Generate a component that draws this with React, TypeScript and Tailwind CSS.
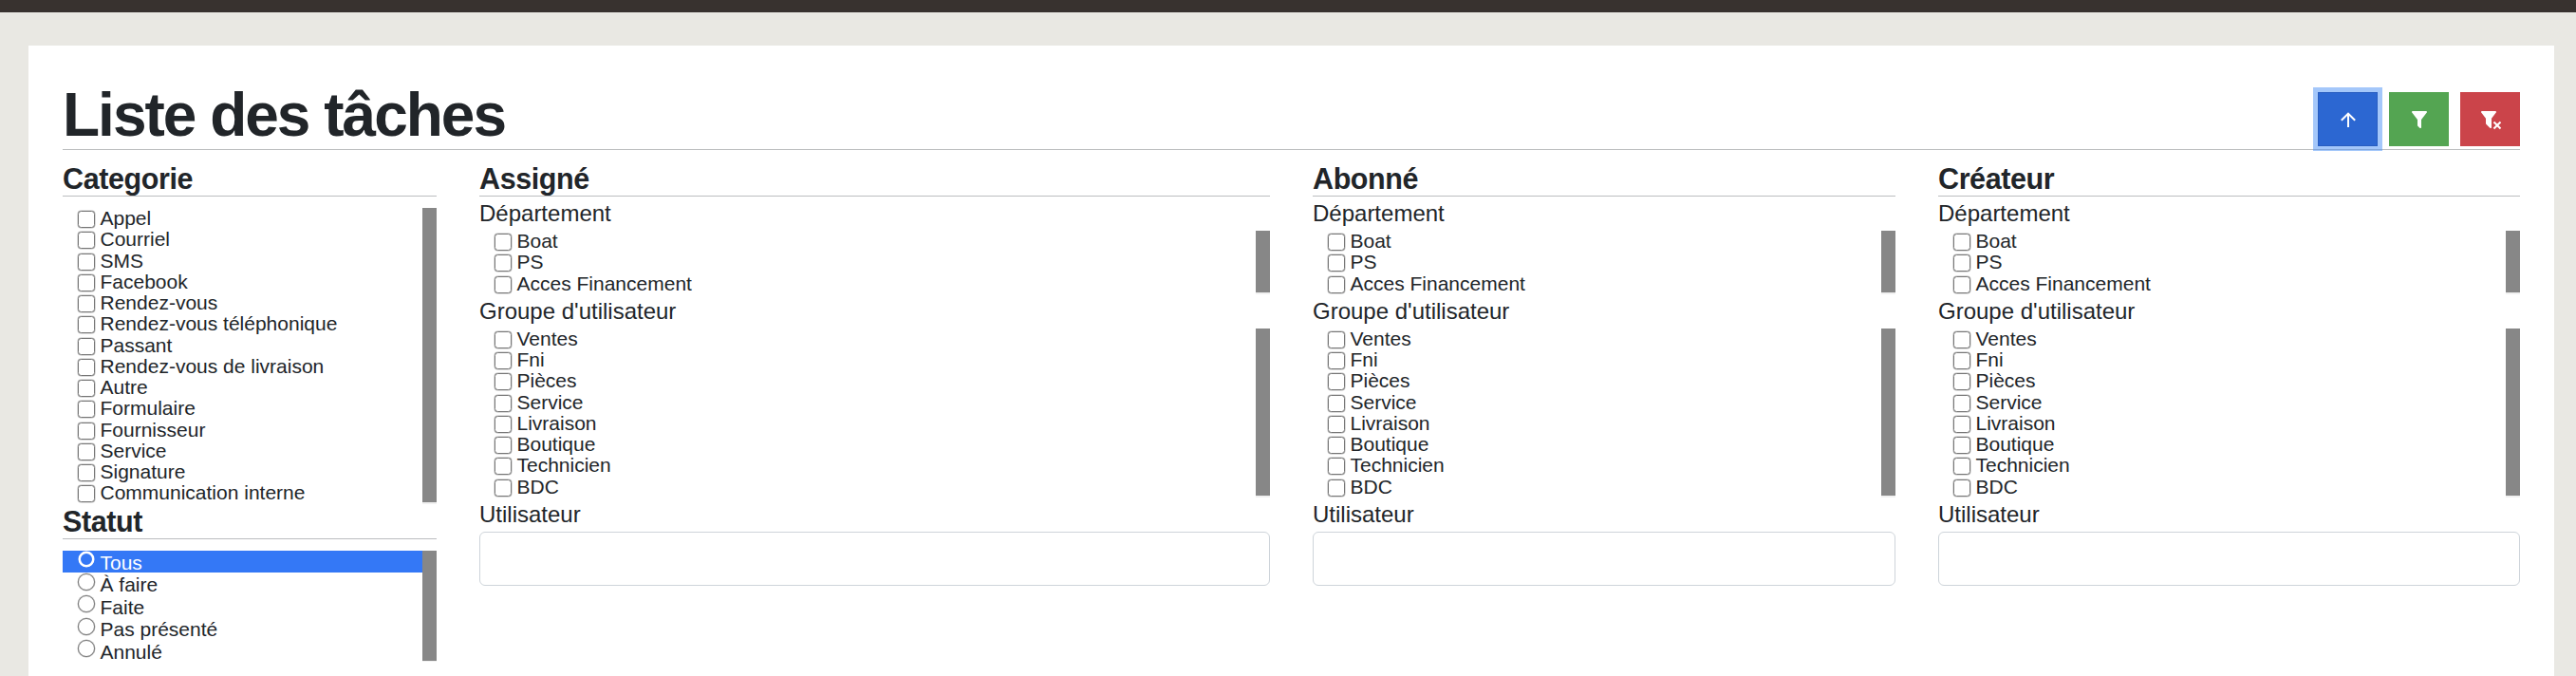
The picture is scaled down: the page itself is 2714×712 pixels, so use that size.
import React, { useState } from 'react';

interface Option {
  id: string;
  label: string;
}

const toOptions = (labels: string[]): Option[] => labels.map((label, i) => ({ id: `${i}`, label }));

const CATEGORIES = toOptions([
  'Appel',
  'Courriel',
  'SMS',
  'Facebook',
  'Rendez-vous',
  'Rendez-vous téléphonique',
  'Passant',
  'Rendez-vous de livraison',
  'Autre',
  'Formulaire',
  'Fournisseur',
  'Service',
  'Signature',
  'Communication interne',
]);
const STATUSES = toOptions(['Tous', 'À faire', 'Faite', 'Pas présenté', 'Annulé']);
const DEPARTMENTS = toOptions(['Boat', 'PS', 'Acces Financement']);
const GROUPS = toOptions(['Ventes', 'Fni', 'Pièces', 'Service', 'Livraison', 'Boutique', 'Technicien', 'BDC']);

const Scrollbar = () => (
  <div className="w-[15px] shrink-0 bg-[#f1f1f1] pb-[1.5px]">
    <div className="h-full bg-[#878787]"></div>
  </div>
);

const Heading: React.FC<{ children: React.ReactNode }> = ({ children }) => (
  <h2 className="h-[37px] border-b border-[#bbbdbf] text-[30.5px] leading-[36px] font-bold tracking-[-0.4px]">{children}</h2>
);

const CheckList: React.FC<{ options: Option[] }> = ({ options }) => {
  const [checked, setChecked] = useState<string[]>([]);

  const toggle = (id: string) => {
    setChecked(checked.includes(id) ? checked.filter((c) => c !== id) : [...checked, id]);
  };

  return (
    <div className="flex">
      <div className="flex-1">
        {options.map((o) => (
          <label key={o.id} className="flex h-[22.25px] items-start pl-[15.5px]">
            <input
              type="checkbox"
              checked={checked.includes(o.id)}
              onChange={() => toggle(o.id)}
              className="mt-[3.2px] mr-[6px] size-[18px] shrink-0 appearance-none rounded-[3.5px] border border-[#767676] bg-white shadow-[0_0_0_0.5px_#76767680] checked:bg-[#3478f6]"
            />
            <span className="text-[21px] leading-[22px]">{o.label}</span>
          </label>
        ))}
      </div>
      <Scrollbar />
    </div>
  );
};

const StatusList = () => {
  const [selected, setSelected] = useState(STATUSES[0].id);

  return (
    <div className="mt-3 flex">
      <div className="flex-1">
        {STATUSES.map((o) => {
          const active = o.id === selected;
          return (
            <label
              key={o.id}
              className={`flex h-[23.5px] items-start pl-[15.5px] ${active ? 'bg-[#3478f6] text-white' : ''}`}
            >
              <input
                type="radio"
                name="status"
                checked={active}
                onChange={() => setSelected(o.id)}
                className="mt-[0.8px] mr-[6px] size-[18px] shrink-0 appearance-none rounded-full border border-[#767676] bg-white shadow-[0_0_0_0.5px_#76767680] checked:m-[1.5px_7px_0_1px] checked:size-4 checked:border-2 checked:border-white checked:bg-[#3478f6] checked:shadow-[0_0_0_0.5px_#ffffff]"
              />
              <span className="text-[21px] leading-[25px]">{o.label}</span>
            </label>
          );
        })}
      </div>
      <Scrollbar />
    </div>
  );
};

const UserFilter: React.FC<{ title: string }> = ({ title }) => (
  <section>
    <Heading>{title}</Heading>
    <h3 className="h-9 text-2xl leading-[35px]">Département</h3>
    <CheckList options={DEPARTMENTS} />
    <h3 className="h-9 text-2xl leading-[36px]">Groupe d'utilisateur</h3>
    <CheckList options={GROUPS} />
    <h3 className="h-9 text-2xl leading-[36px]">Utilisateur</h3>
    <input type="text" className="block h-[57px] w-full rounded-md border border-[#ced4da] bg-white px-4 text-2xl" />
  </section>
);

const App = () => {
  return (
    <div className="h-[712px] overflow-hidden bg-[#e9e8e3] font-['Liberation_Sans',Arial,sans-serif] text-[#212529]">
      <div className="h-[13px] bg-[#38322f]"></div>
      <main className="mt-[35px] mr-[23px] ml-[30px] h-[664px] bg-white px-9 pt-[37px]">
        <header className="flex h-[73px] items-start justify-between border-b border-[#bbbdbf]">
          <h1 className="text-[64px] leading-[72px] font-bold tracking-[-2px]">Liste des tâches</h1>
          <div className="mt-3 flex gap-3">
            <button className="flex h-[57px] w-[63px] items-center justify-center border border-[#285dc1] bg-[#2c67d2] text-white ring-[5px] ring-[#4a90f5]/50">
              <svg viewBox="0 0 24 24" className="size-6" fill="currentColor">
                <path d="M13 20h-2V8l-5.500 5.500-1.420-1.420L12 4.160l7.920 7.920-1.420 1.420L13 8v12z" />
              </svg>
            </button>
            <button className="flex h-[57px] w-[63px] items-center justify-center bg-[#54a552] text-white">
              <svg viewBox="0 0 24 24" className="size-6" fill="currentColor">
                <path d="M14 12v7.880c.040.300-.060.620-.290.830a1 1 0 0 1-1.410 0l-2.010-2.010a.990.990 0 0 1-.290-.830V12h-.030L4.210 4.620a1 1 0 0 1 .170-1.400c.190-.140.400-.220.620-.220h14c.220 0 .430.080.620.220a1 1 0 0 1 .170 1.400L14.030 12H14z" />
              </svg>
            </button>
            <button className="flex h-[57px] w-[63px] items-center justify-center bg-[#cb444a] text-white">
              <svg viewBox="0 0 24 24" className="size-6" fill="currentColor">
                <path d="M14.730 20.830L17.580 18l-2.850-2.830 1.420-1.410L19 16.570l2.800-2.810 1.420 1.410L20.410 18l2.810 2.830-1.420 1.410L19 19.400l-2.850 2.840-1.420-1.410M13 19.880c.040.300-.060.620-.290.830a1 1 0 0 1-1.410 0l-4.010-4.010a.990.990 0 0 1-.290-.830V10.750L2.210 4.620a1 1 0 0 1 .170-1.400c.190-.140.400-.220.620-.220h14c.220 0 .430.080.620.220a1 1 0 0 1 .170 1.400L13 10.750v9.130z" />
              </svg>
            </button>
          </div>
        </header>

        <div className="mt-3 grid grid-cols-[394px_833px_614px_1fr] gap-x-[45px]">
          <section>
            <Heading>Categorie</Heading>
            <div className="mt-3">
              <CheckList options={CATEGORIES} />
            </div>
            <Heading>Statut</Heading>
            <StatusList />
          </section>
          <UserFilter title="Assigné" />
          <UserFilter title="Abonné" />
          <UserFilter title="Créateur" />
        </div>
      </main>
    </div>
  );
};

export default App;
